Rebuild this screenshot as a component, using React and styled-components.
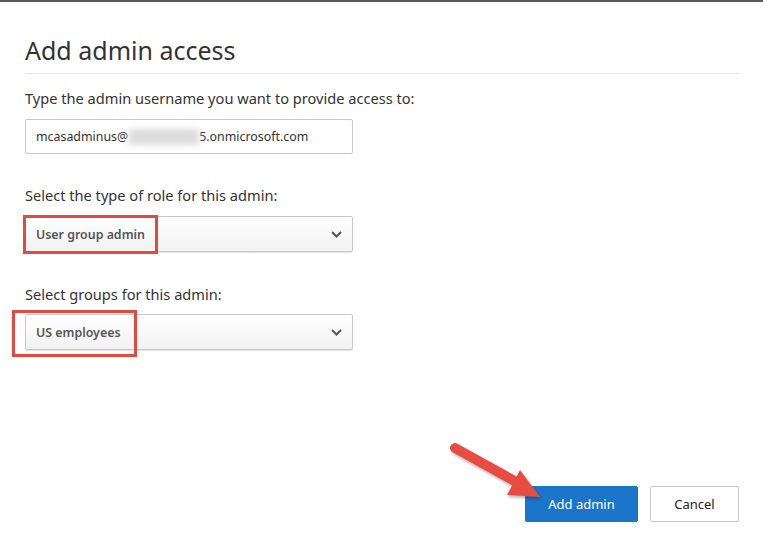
import React from "react";
import styled, { createGlobalStyle } from "styled-components";

const GlobalStyle = createGlobalStyle`
  html, body {
    margin: 0;
    padding: 0;
    background: #ffffff;
  }
  body {
    font-family: "Noto Sans", "Open Sans", sans-serif;
    color: #333333;
  }
`;

const Frame = styled.div`
  position: relative;
  width: 763px;
  height: 546px;
  border-top: 2px solid #5a5a5a;
  display: flex;
  flex-direction: column;
  padding: 0 25px 24px 25px;
  box-sizing: border-box;
`;

const Title = styled.h1`
  margin: 32px 0 0 0;
  font-size: 25px;
  font-weight: 400;
  line-height: 32px;
  color: #333333;
`;

const Divider = styled.hr`
  margin: 7px 0 0 0;
  width: 715px;
  border: 0;
  border-top: 1px solid #e6e6e6;
`;

const Label = styled.div`
  margin-top: ${(p) => p.$top}px;
  font-size: 14.6px;
  line-height: 20px;
  color: #333333;
`;

const Field = styled.div`
  position: relative;
  margin-top: ${(p) => p.$top}px;
  width: 328px;
  height: ${(p) => (p.$select ? 36 : 35)}px;
  box-sizing: border-box;
  border: 1px solid #c8c8c8;
  border-radius: 2px;
  display: flex;
  align-items: center;
  padding: 0 10px 0 10px;
  font-size: 12.4px;
  color: #333333;
  background: ${(p) =>
    p.$select ? "linear-gradient(#ffffff, #f2f2f2)" : "#ffffff"};
  box-shadow: ${(p) => (p.$select ? "0 1px 1px rgba(0,0,0,0.12)" : "none")};
`;

const Blurred = styled.span`
  display: inline-block;
  width: 70px;
  height: 16px;
  background: #dcdcdc;
  filter: blur(3px);
  margin: 0 0 0 1px;
`;

const SelectValue = styled.span`
  flex: 1;
  font-weight: 600;
  color: #555555;
`;

const Highlight = styled.div`
  position: absolute;
  left: ${(p) => p.$left}px;
  top: ${(p) => p.$top}px;
  width: ${(p) => p.$w}px;
  height: ${(p) => p.$h}px;
  border: 3px solid #e24a40;
  box-sizing: border-box;
  pointer-events: none;
`;

const Footer = styled.div`
  margin-top: auto;
  display: flex;
  justify-content: flex-end;
  gap: 12px;
  width: 714px;
`;

const Button = styled.button`
  height: 36px;
  min-width: ${(p) => p.$w}px;
  box-sizing: border-box;
  border-radius: 2px;
  font-family: inherit;
  font-size: 13px;
  cursor: pointer;
  border: 1px solid ${(p) => (p.$primary ? "#1b75c8" : "#c8c8c8")};
  background: ${(p) => (p.$primary ? "#1b75c8" : "#ffffff")};
  color: ${(p) => (p.$primary ? "#ffffff" : "#222222")};
`;

const Arrow = styled.svg`
  position: absolute;
  left: 440px;
  top: 430px;
  overflow: visible;
`;

const Chevron = () => (
  <svg width="11" height="7" viewBox="0 0 11 7">
    <path d="M1 1 L5.5 5.5 L10 1" fill="none" stroke="#555" strokeWidth="2" />
  </svg>
);

export default function App() {
  return (
    <>
      <GlobalStyle />
      <Frame>
        <Title>Add admin access</Title>
        <Divider />
        <Label $top={14}>Type the admin username you want to provide access to:</Label>
        <Field $top={11}>
          mcasadminus@<Blurred />5.onmicrosoft.com
        </Field>
        <Label $top={31}>Select the type of role for this admin:</Label>
        <Field $top={11} $select>
          <SelectValue>User group admin</SelectValue>
          <Chevron />
          <Highlight $left={-3} $top={-2} $w={135} $h={39} />
        </Field>
        <Label $top={32}>Select groups for this admin:</Label>
        <Field $top={10} $select>
          <SelectValue>US employees</SelectValue>
          <Chevron />
          <Highlight $left={-14} $top={-5} $w={125} $h={47} />
        </Field>
        <Footer>
          <Button $primary $w={113}>Add admin</Button>
          <Button $w={89}>Cancel</Button>
        </Footer>
        <Arrow width="110" height="75" viewBox="0 0 110 75">
          <defs>
            <filter id="sh" x="-20%" y="-20%" width="140%" height="140%">
              <feDropShadow dx="1" dy="2" stdDeviation="1.5" floodColor="#000" floodOpacity="0.3" />
            </filter>
          </defs>
          <g filter="url(#sh)">
            <line x1="15" y1="16" x2="78" y2="51" stroke="#e84c43" strokeWidth="10" strokeLinecap="round" />
            <polygon points="80,38 100,65 67,63" fill="#e84c43" />
          </g>
        </Arrow>
      </Frame>
    </>
  );
}
